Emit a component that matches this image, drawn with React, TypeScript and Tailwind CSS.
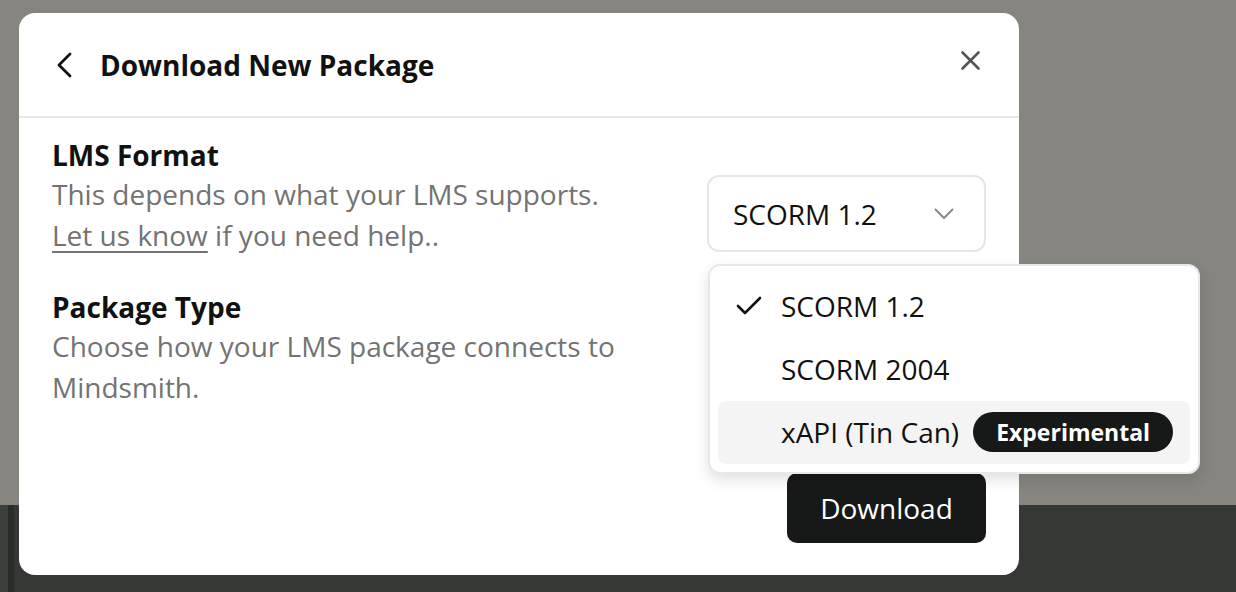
import React from "react";

export default function App() {
  const font = { fontFamily: '"Open Sans", "Noto Sans", sans-serif' };
  return (
    <div className="relative w-[1236px] h-[592px] overflow-hidden" style={font}>
      {/* backdrop */}
      <div className="flex flex-col w-full h-full">
        <div className="h-[505px] bg-[#868580]" />
        <div className="flex-1 bg-[#363836] flex">
          <div className="w-[8px] bg-[#3d3f3d]" />
          <div className="w-[6px] bg-[#2a2c2a]" />
          <div className="flex-1" />
        </div>
      </div>

      {/* modal */}
      <div className="absolute left-[19px] top-[13px] w-[1000px] h-[562px] bg-white rounded-[16px] flex flex-col">
        <div className="h-[105px] flex items-center pl-[38px] pr-[38px] border-b-2 border-[#e8e8e8] shrink-0">
          <svg width="16" height="26" viewBox="0 0 16 26" className="shrink-0">
            <polyline points="13,2 2,13 13,24" fill="none" stroke="#111" strokeWidth="2.8" strokeLinecap="round" strokeLinejoin="round" />
          </svg>
          <div className="ml-[27px] text-[28px] leading-[36px] font-bold text-[#111]">Download New Package</div>
          <div className="flex-1" />
          <svg width="22" height="22" viewBox="0 0 22 22" className="shrink-0 -mt-[10px]">
            <path d="M3.5 3.5 L19.5 19.5 M19.5 3.5 L3.5 19.5" fill="none" stroke="#555" strokeWidth="2.6" strokeLinecap="round" />
          </svg>
        </div>

        <div className="flex-1 flex flex-col px-[33px] pt-[18px] pb-[32px]">
          <div className="flex justify-between items-start">
            <div className="flex flex-col">
              <div className="text-[28px] leading-[38px] font-bold text-[#111]">LMS Format</div>
              <div className="text-[28px] leading-[41px] text-[#737373]">
                This depends on what your LMS supports.
                <br />
                <span className="underline underline-offset-[5px] decoration-[2px]">Let us know</span> if you need help..
              </div>
            </div>
            <div className="mt-[39px] w-[279px] h-[77px] border-2 border-[#e6e6e6] rounded-[12px] flex items-center pl-[24px] pr-[30px]">
              <span className="text-[28px] text-[#111]">SCORM 1.2</span>
              <div className="flex-1" />
              <svg width="20" height="12" viewBox="0 0 20 12">
                <polyline points="1.5,1.5 10,10 18.5,1.5" fill="none" stroke="#888" strokeWidth="2" strokeLinecap="round" strokeLinejoin="round" />
              </svg>
            </div>
          </div>

          <div className="mt-[32px] flex flex-col">
            <div className="text-[28px] leading-[38px] font-bold text-[#111]">Package Type</div>
            <div className="text-[28px] leading-[41px] text-[#737373]">
              Choose how your LMS package connects to
              <br />
              Mindsmith.
            </div>
          </div>

          <div className="flex-1" />
          <div className="flex justify-end">
            <button className="w-[199px] h-[70px] bg-[#171918] rounded-[10px] text-white text-[28px]">Download</button>
          </div>
        </div>
      </div>

      {/* dropdown menu */}
      <div className="absolute left-[708px] top-[264px] w-[492px] h-[210px] bg-white border-2 border-[#e8e8e8] rounded-[12px] shadow-[0_6px_14px_rgba(0,0,0,0.12)] p-[8px] flex flex-col">
        <div className="h-[64px] flex items-center pl-[18px] rounded-[8px]">
          <svg width="26" height="20" viewBox="0 0 26 20" className="shrink-0">
            <polyline points="2,10 9,17 24,2" fill="none" stroke="#111" strokeWidth="2.6" strokeLinecap="round" strokeLinejoin="round" />
          </svg>
          <span className="ml-[19px] text-[28px] text-[#111]">SCORM 1.2</span>
        </div>
        <div className="h-[64px] flex items-center pl-[63px] rounded-[8px]">
          <span className="text-[28px] text-[#111]">SCORM 2004</span>
        </div>
        <div className="h-[64px] flex items-center pl-[63px] rounded-[8px] bg-[#f4f4f4]">
          <span className="text-[28px] text-[#111]">xAPI (Tin Can)</span>
          <span className="ml-[14px] h-[40px] px-[23px] rounded-full bg-[#171918] text-white text-[23px] font-bold flex items-center">Experimental</span>
        </div>
      </div>
    </div>
  );
}
